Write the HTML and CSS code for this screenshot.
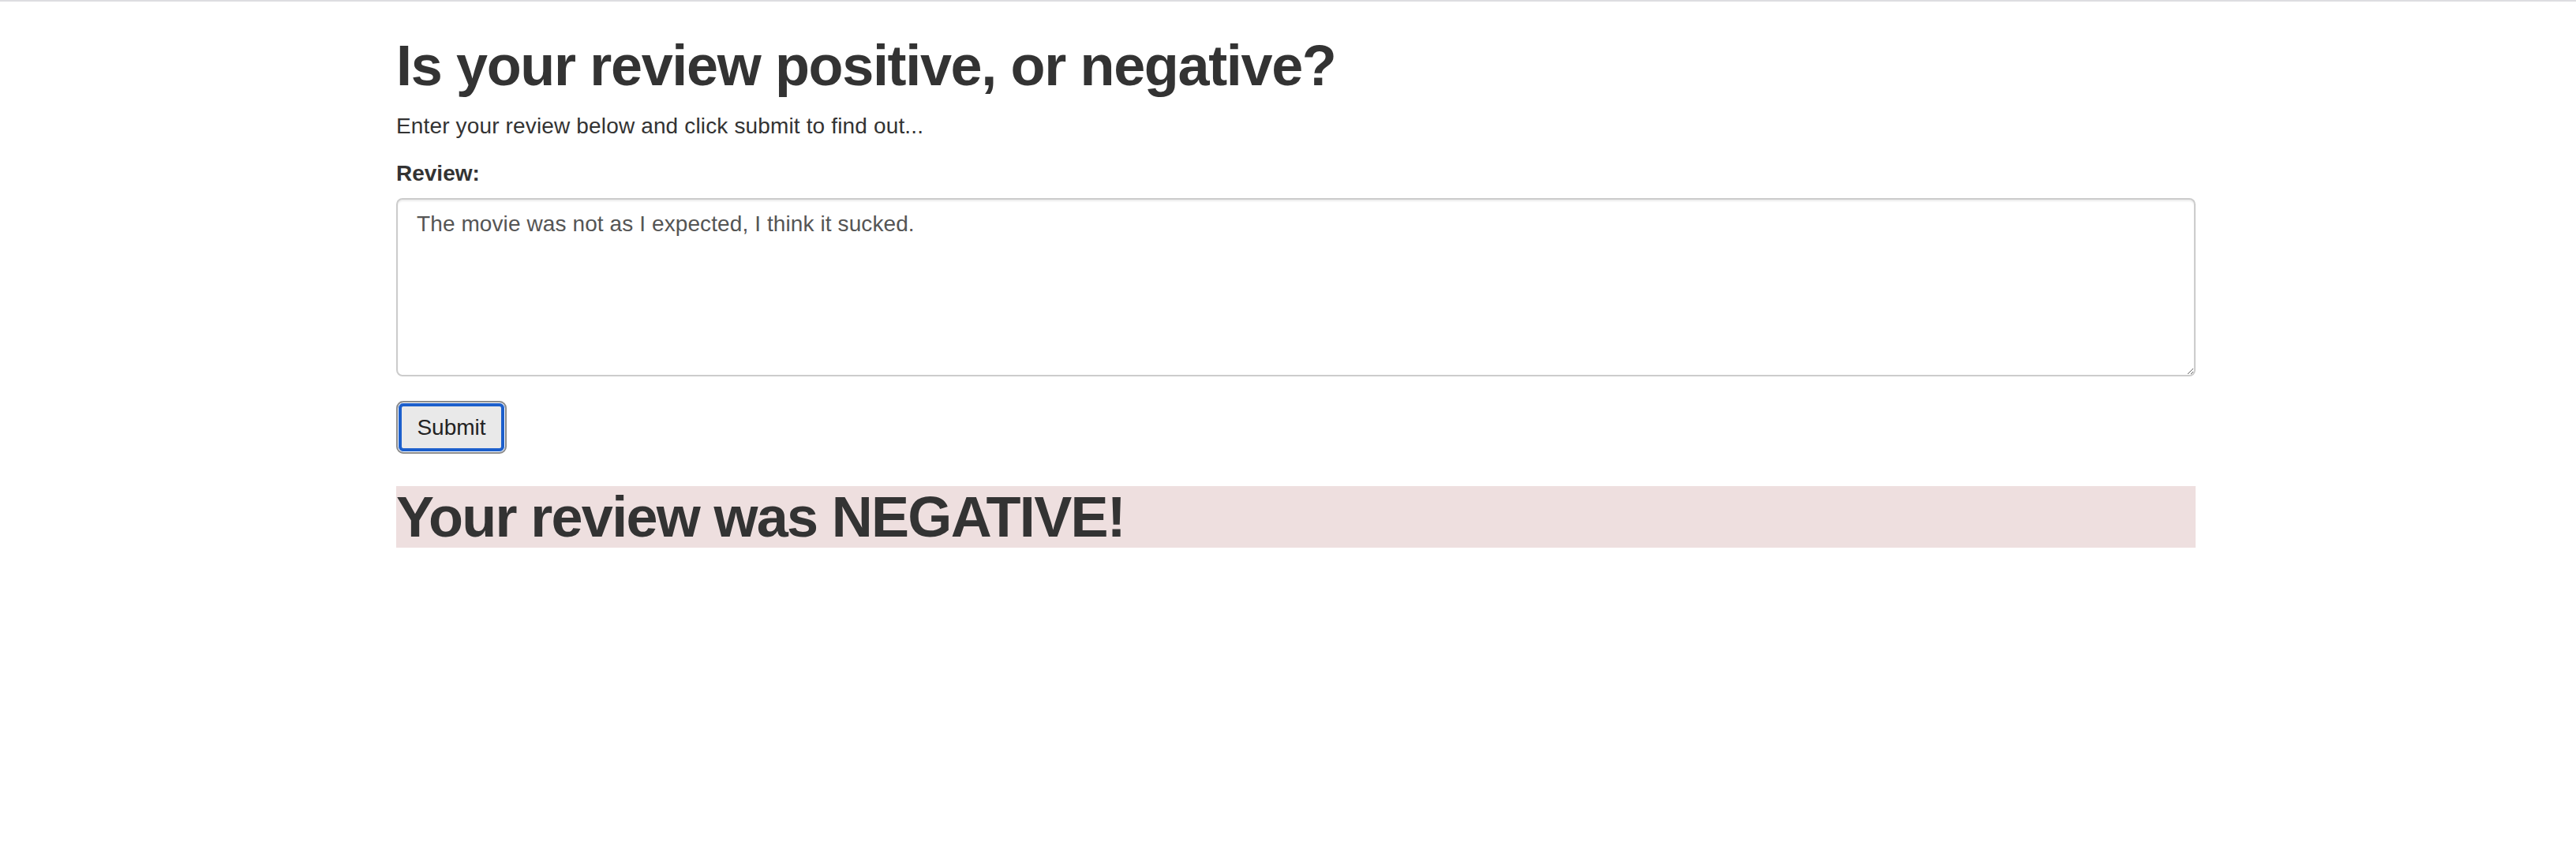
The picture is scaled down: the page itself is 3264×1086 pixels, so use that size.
FILE: index.html
```html
<!DOCTYPE html>
<html lang="en">
<head>
<meta charset="utf-8">
<title>Review sentiment</title>
<link rel="stylesheet" href="styles.css">
</head>
<body>
<div class="topline"></div>
<div class="container">
  <h1 class="title">Is your review positive, or negative?</h1>
  <p class="intro">Enter your review below and click submit to find out...</p>
  <form class="review-form">
    <div class="form-group">
      <label class="field-label" for="review">Review:</label>
      <textarea id="review" class="field" rows="5">The movie was not as I expected, I think it sucked.</textarea>
    </div>
    <button type="button" class="submit">Submit</button>
  </form>
  <h1 class="result">Your review was NEGATIVE!</h1>
</div>
</body>
</html>
```
FILE: styles.css
```css
html, body {
  margin: 0;
  padding: 0;
  background: #fff;
}
body {
  font-family: "Liberation Sans", Arial, sans-serif;
  color: #333;
}
.topline {
  height: 2px;
  background: #dddde1;
}
.container {
  width: 2280px;
  margin-left: 502px;
}
.title {
  margin: 42px 0 17px;
  font-size: 72px;
  font-weight: 700;
  line-height: 79.2px;
  letter-spacing: -1.35px;
  color: #333;
}
.intro {
  margin: 0 0 20px;
  font-size: 28px;
  line-height: 40px;
  letter-spacing: 0.15px;
  color: #333;
}
.review-form {
  margin: 0;
}
.form-group {
  margin-bottom: 31px;
}
.field-label {
  display: block;
  margin-bottom: 11px;
  font-size: 28px;
  font-weight: 700;
  line-height: 40px;
}
.field {
  display: block;
  box-sizing: border-box;
  width: 100%;
  height: 226px;
  margin: 0;
  padding: 11px 24px;
  border: 2px solid #cccccc;
  border-radius: 8px;
  box-shadow: inset 0 2px 2px rgba(0, 0, 0, 0.075);
  font-family: "Liberation Sans", Arial, sans-serif;
  font-size: 28px;
  line-height: 40px;
  letter-spacing: 0.1px;
  color: #555;
  background: #fff;
}
.submit {
  display: block;
  box-sizing: border-box;
  width: 140px;
  height: 67px;
  margin: 0;
  padding: 0;
  border: 2px solid #8c8c8c;
  border-radius: 9px;
  background: #e9e9e9;
  box-shadow: inset 0 0 0 1px #ffffff, inset 0 0 0 5px #1c5fcc;
  font-family: "Liberation Sans", Arial, sans-serif;
  font-size: 28px;
  color: #222;
}
.result {
  margin: 41px 0 0;
  font-size: 72px;
  font-weight: 700;
  line-height: 78px;
  letter-spacing: -1.7px;
  color: #333;
  background: #eedfdf;
}
```
